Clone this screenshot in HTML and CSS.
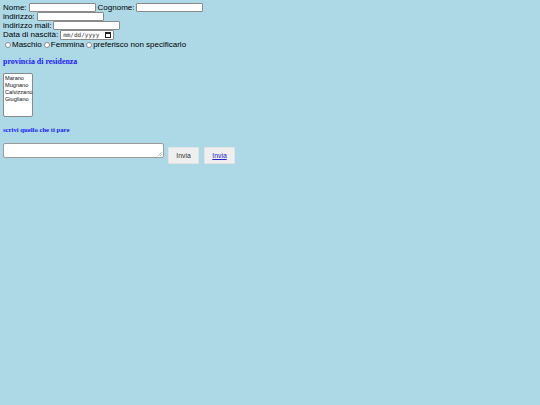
FILE: index.html
```html
<!DOCTYPE html>
<html>
<head>
<meta charset="utf-8">
<link rel="stylesheet" href="styles.css">
</head>
<body>
<form class="form">
  <div class="row">Nome:<input class="field w-name" type="text">Cognome:<input class="field w-name" type="text"></div>
  <div class="row">indirizzo:<input class="field w-name" type="text"></div>
  <div class="row">indirizzo mail:<input class="field w-name" type="text"></div>
  <div class="row">Data di nascità:<span class="date"><span class="date-text">mm/dd/yyyy</span><svg class="cal" width="6" height="6" viewBox="0 0 6 6"><rect x="0.5" y="0.5" width="5" height="5" fill="none" stroke="#222" stroke-width="1"/><rect x="0.5" y="0.5" width="5" height="1.5" fill="#222"/></svg></span></div>
  <div class="row radios">
    <span class="radio"></span>Maschio
    <span class="radio"></span>Femmina
    <span class="radio"></span>preferisco non specificarlo
  </div>
  <h2 class="title">provincia di residenza</h2>
  <div class="select">
    <div>Marano</div>
    <div>Mugnano</div>
    <div>Calvizzano</div>
    <div>Giugliano</div>
  </div>
  <h3 class="subtitle">scrivi quello che ti pare</h3>
  <div class="bottom">
    <div class="textarea"><svg class="grip" width="4" height="4" viewBox="0 0 4 4"><path d="M4 0 L0 4 M4 2 L2 4" stroke="#999" stroke-width="0.6"/></svg></div>
    <button class="btn" type="button">Invia</button>
    <button class="btn link" type="button">Invia</button>
  </div>
</form>
</body>
</html>
```
FILE: styles.css
```css
html, body {
  margin: 0;
  padding: 0;
  background: #add8e6;
}
body {
  padding: 3px;
  font-family: "Liberation Sans", Arial, sans-serif;
  font-size: 8px;
  color: #000;
}
.form {
  display: flex;
  flex-direction: column;
  align-items: flex-start;
}
.row {
  display: flex;
  align-items: center;
  height: 9px;
  line-height: 9px;
  white-space: nowrap;
}
.field {
  box-sizing: border-box;
  height: 9px;
  border: 1px solid #8a8a8a;
  background: #fff;
  margin: 0 2px 0 2px;
  padding: 0;
  border-radius: 1px;
}
.w-name { width: 67px; }
.date {
  box-sizing: border-box;
  display: flex;
  align-items: center;
  justify-content: space-between;
  width: 54px;
  height: 10px;
  margin-left: 2px;
  padding: 0 2px 0 2px;
  background: #fff;
  border: 1px solid #8a8a8a;
  border-radius: 1px;
  font-family: "DejaVu Sans Mono", monospace;
  font-size: 6px;
  color: #333;
}
.cal { display: block; }
.radios { margin-top: 1px; }
.radio {
  box-sizing: border-box;
  display: inline-block;
  width: 6px;
  height: 6px;
  border-radius: 50%;
  background: #fff;
  border: 1px solid #8d8d8d;
  margin: 0 1px 0 2px;
}
.title {
  margin: 8px 0 0 0;
  font-family: "Liberation Serif", "Times New Roman", serif;
  font-size: 7.9px;
  font-weight: bold;
  color: #1a1aff;
  line-height: 9px;
}
.select {
  box-sizing: border-box;
  margin-top: 7px;
  width: 30px;
  height: 44px;
  background: #fff;
  border: 1px solid #8a8a8a;
  border-radius: 2px;
  padding: 1px 1px;
  font-size: 5.6px;
  line-height: 7px;
  color: #111;
}
.subtitle {
  margin: 9px 0 0 0;
  font-family: "Liberation Serif", "Times New Roman", serif;
  font-size: 6.7px;
  font-weight: bold;
  color: #1a1aff;
  line-height: 8px;
}
.bottom {
  display: flex;
  align-items: flex-end;
  margin-top: 9px;
}
.textarea {
  box-sizing: border-box;
  position: relative;
  width: 161px;
  height: 15px;
  margin-bottom: 6px;
  background: #fff;
  border: 1px solid #9a9a9a;
  border-radius: 2px;
}
.grip {
  position: absolute;
  right: 1px;
  bottom: 1px;
}
.btn {
  box-sizing: border-box;
  width: 31px;
  height: 17px;
  margin-left: 4px;
  padding: 0;
  border: 1px solid #e3e3e3;
  border-radius: 1px;
  background: #efefef;
  font-family: "Liberation Sans", Arial, sans-serif;
  font-size: 6.8px;
  color: #333;
}
.btn.link {
  margin-left: 5px;
  color: #2222cc;
  text-decoration: underline;
}
```
